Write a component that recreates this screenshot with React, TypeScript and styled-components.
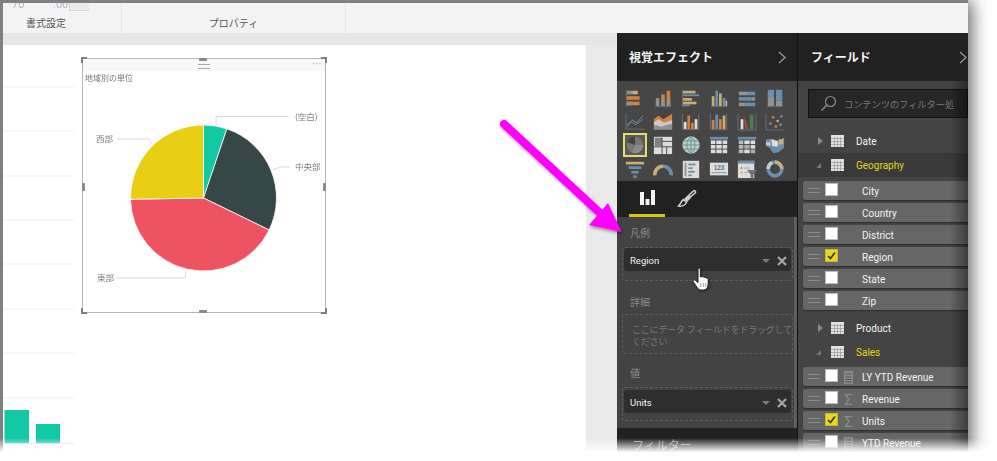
import React from "react";
import styled, { createGlobalStyle } from "styled-components";

const GlobalStyle = createGlobalStyle`
  html, body {
    margin: 0;
    padding: 0;
    background: #fff;
    overflow: hidden;
  }
  body {
    font-family: Roboto, "Noto Sans CJK JP", sans-serif;
  }
`;

const OR = "#e58a3c";
const BL = "#6f98ba";
const TN = "#dcbc78";
const GR = "#9c9c9c";
const WH = "#f2f2f2";
const AX = "#777";

type Bar = [number, number, number, number, string];

// charts made only of rects
const barIcons: Record<string, Bar[]> = {
  stackedBar: [[2, 3, 6, 4, GR], [8, 3, 6, 4, TN], [2, 9, 14, 4, OR], [2, 15, 14, 4, OR], [2, 15, 5, 4, GR], [1, 2, 1, 19, AX]],
  stackedCol: [[3, 11, 4, 9, GR], [9, 7, 4, 13, OR], [15, 3, 4, 17, OR], [15, 12, 4, 8, GR], [9, 14, 4, 6, GR], [2, 20, 18, 1, AX]],
  clusterBar: [[2, 3, 14, 3, TN], [2, 7, 18, 2, BL], [2, 11, 10, 3, TN], [2, 15, 15, 3, TN], [2, 18, 8, 2, BL], [1, 2, 1, 19, AX]],
  clusterCol: [[3, 9, 3, 11, TN], [7, 3, 3, 17, BL], [11, 6, 3, 14, TN], [15, 11, 3, 9, BL], [18, 14, 2, 6, TN], [2, 20, 18, 1, AX]],
  fullBar: [[2, 4, 10, 4, GR], [12, 4, 8, 4, BL], [2, 10, 14, 4, BL], [16, 10, 4, 4, GR], [2, 16, 7, 4, GR], [9, 16, 11, 4, BL]],
  fullCol: [[3, 2, 7, 8, BL], [3, 10, 7, 10, GR], [12, 2, 7, 12, BL], [12, 14, 7, 6, GR], [2, 20, 18, 1, AX]],
  comboA: [[3, 12, 3, 8, WH], [7, 5, 3, 15, OR], [11, 13, 3, 7, OR], [15, 9, 3, 11, WH], [2, 20, 18, 1, AX], [1, 3, 1, 17, AX], [19, 3, 1, 17, AX]],
  comboB: [[3, 10, 3, 10, OR], [7, 4, 3, 16, BL], [11, 9, 3, 11, OR], [15, 5, 3, 15, TN], [2, 20, 18, 1, AX], [1, 3, 1, 17, AX], [19, 3, 1, 17, AX]],
  tableA: [[1, 2, 20, 3, BL], [2, 6, 5, 4, WH], [8, 6, 6, 4, WH], [15, 6, 5, 4, WH], [2, 11, 5, 4, WH], [8, 11, 6, 4, WH], [15, 11, 5, 4, WH], [2, 16, 5, 4, WH], [8, 16, 6, 4, WH], [15, 16, 5, 4, WH]],
  tableB: [[1, 2, 20, 3, BL], [2, 6, 5, 4, "#ccc"], [8, 6, 6, 4, WH], [15, 6, 5, 4, WH], [2, 11, 5, 4, "#ccc"], [8, 11, 6, 4, "#bbb"], [15, 11, 5, 4, WH], [2, 16, 5, 4, "#ccc"], [8, 16, 6, 4, WH], [15, 16, 5, 4, "#bbb"]],
  funnel: [[1, 3, 20, 3, TN], [4, 8, 14, 3, BL], [7, 13, 8, 3, BL], [9, 18, 4, 3, BL]],
  slicer: [[2, 2, 18, 19, WH], [4, 4, 2, 15, GR], [8, 5, 8, 2, BL], [8, 9, 5, 2, GR], [8, 13, 7, 2, BL], [8, 17, 4, 2, GR]],
};

// charts that need curves
const curveIcons: Record<string, React.ReactNode> = {
  line: (
    <>
      <path d="M1 20 L21 20 M1 3 L1 20" stroke={AX} fill="none" />
      <path d="M2 18 L8 10 L13 13 L20 5" stroke={GR} fill="none" />
      <path d="M2 15 L7 12 L12 15 L20 9" stroke={BL} fill="none" />
    </>
  ),
  area: (
    <>
      <path d="M1 20 V9 L6 5 L11 9 L15 7 L21 3 V20 Z" fill={OR} />
      <path d="M1 20 V12 L6 9 L12 13 L21 10 V20 Z" fill="#ddd" />
      <path d="M1 20 V15 L9 17 L21 14 V20 Z" fill={GR} />
    </>
  ),
  ribbon: (
    <>
      <path d="M1 3 V21 H21 V3" stroke={AX} fill="none" />
      <rect x="4" y="9" width="3" height="11" fill={WH} />
      <path d="M8 6 L12 16 V20 H9 L8 12 Z" fill="#b04a40" />
      <rect x="14" y="4" width="4" height="16" fill="#4a8a5a" />
    </>
  ),
  scatter: (
    <>
      <path d="M1 3 V21 H21" stroke={AX} fill="none" />
      <circle cx="6" cy="14" r="1.5" fill={BL} />
      <circle cx="9" cy="7" r="1.5" fill={OR} />
      <circle cx="14" cy="11" r="1.5" fill={TN} />
      <circle cx="18" cy="6" r="1.5" fill={BL} />
      <circle cx="12" cy="17" r="1.5" fill={OR} />
      <circle cx="17" cy="15" r="1.5" fill={BL} />
    </>
  ),
  pie: (
    <>
      <rect width="22" height="22" fill="#5a5a5a" />
      <circle cx="11" cy="11" r="9" fill="#777" />
      <path d="M11 11 L11 2 A9 9 0 0 0 2.5 8 Z" fill="#444" />
      <path d="M11 11 L20 11 A9 9 0 0 1 8 19.5 Z" fill="#8c8c8c" />
    </>
  ),
  tree: (
    <>
      <rect x="1" y="2" width="20" height="19" fill={WH} />
      <rect x="2" y="3" width="8" height="9" fill="#888" />
      <path d="M10 7 H21 M10 3 V21 M1 13 H21 M15 13 V21" stroke="#444" />
    </>
  ),
  globe: (
    <>
      <circle cx="11" cy="11" r="9.5" fill="#cfe3dd" />
      <path d="M1.5 11 H20.5 M3 6.5 H19 M3 15.5 H19 M11 1.5 V20.5 M11 1.5 C5 6 5 16 11 20.5 M11 1.5 C17 6 17 16 11 20.5" stroke="#5f9c94" fill="none" />
    </>
  ),
  filledMap: (
    <>
      <path d="M1 5 L8 4 L14 6 L21 3 V14 L15 19 L9 20 L5 14 L1 12 Z" fill={BL} />
      <path d="M7 5 L14 7 V13 L8 12 Z" fill={WH} />
      <path d="M15 5 L20 4 V10 L15 11 Z" fill={TN} />
      <path d="M1 8 L6 8 V12 L1 11 Z" fill="#ddd" />
    </>
  ),
  gauge: (
    <>
      <path d="M2 18 A9 9 0 0 1 11 8" stroke={TN} strokeWidth="4" fill="none" />
      <path d="M11 8 A9 9 0 0 1 20 18" stroke={BL} strokeWidth="4" fill="none" />
    </>
  ),
  card: (
    <>
      <rect x="1" y="4" width="20" height="14" fill={WH} />
      <text x="11" y="12" fontSize="7" fontWeight="700" textAnchor="middle" fill="#5a7fa0" fontFamily="Liberation Sans, sans-serif">123</text>
      <path d="M3 15 H19" stroke="#999" />
    </>
  ),
  kpi: (
    <>
      <rect x="1" y="2" width="18" height="19" fill={WH} />
      <rect x="1" y="2" width="18" height="3" fill={BL} />
      <circle cx="5" cy="10" r="1.2" fill={OR} />
      <circle cx="5" cy="15" r="1.2" fill={TN} />
      <path d="M8 10 H14 M8 15 H12" stroke="#aaa" />
      <path d="M11 12 H22 L18 17 V22 L15 20 V17 Z" fill="#777" />
    </>
  ),
  donut: (
    <>
      <circle cx="11" cy="11" r="7.5" stroke={BL} strokeWidth="4" fill="none" />
      <path d="M11 3.5 A7.5 7.5 0 0 1 18.5 11" stroke={TN} strokeWidth="4" fill="none" />
      <path d="M3.5 11 A7.5 7.5 0 0 1 8 4" stroke="#ddd" strokeWidth="4" fill="none" />
    </>
  ),
};

const vizOrder = [
  "stackedBar", "stackedCol", "clusterBar", "clusterCol", "fullBar", "fullCol",
  "line", "area", "comboA", "comboB", "ribbon", "scatter",
  "pie", "tree", "globe", "tableA", "tableB", "filledMap",
  "funnel", "gauge", "slicer", "card", "kpi", "donut",
];

const VizIcon = ({ name }: { name: string }) => (
  <svg width="20" height="20" viewBox="0 0 22 22">
    {barIcons[name]?.map((b, i) => (
      <rect key={i} x={b[0]} y={b[1]} width={b[2]} height={b[3]} fill={b[4]} />
    ))}
    {curveIcons[name]}
  </svg>
);

const pieCx = 120.5;
const pieCy = 113;
const pieR = 73;

const slices = [
  { from: 0, to: 18.7, color: "#13c9a5" },
  { from: 18.7, to: 116, color: "#374747" },
  { from: 116, to: 269, color: "#ef5260" },
  { from: 269, to: 360, color: "#e9cf13" },
];

const slicePath = (from: number, to: number) => {
  const point = (deg: number) => {
    const a = (deg * Math.PI) / 180;
    return `${pieCx + pieR * Math.sin(a)} ${pieCy - pieR * Math.cos(a)}`;
  };
  const large = to - from > 180 ? 1 : 0;
  return `M${pieCx} ${pieCy} L${point(from)} A${pieR} ${pieR} 0 ${large} 1 ${point(to)} Z`;
};

const pieLabels = [
  { text: "(空白)", x: 212, y: 35, line: "M133 40 V31.5 H205" },
  { text: "中央部", x: 212, y: 85, line: "M190 85 L197 82 H207" },
  { text: "西部", x: 13, y: 57, line: "M34 54 H66 L69 59" },
  { text: "東部", x: 14, y: 196, line: "M33 193 H102 L103 186" },
];

const geographyFields = ["City", "Country", "District", "Region", "State", "Zip"];
const salesFields = [
  { name: "LY YTD Revenue", kind: "calc" },
  { name: "Revenue", kind: "sum" },
  { name: "Units", kind: "sum", checked: true },
  { name: "YTD Revenue", kind: "calc" },
];

const TableIcon = () => (
  <TableGlyph viewBox="0 0 13 12">
    <rect width="13" height="12" fill="#e2e2e2" />
    <path d="M0 3.5 H13 M0 6.5 H13 M0 9.5 H13 M3.5 2 V12 M6.5 2 V12 M9.5 2 V12" stroke="#8e8e8e" strokeWidth="0.6" />
  </TableGlyph>
);

const FieldRow = ({
  name,
  checked,
  kind,
}: {
  name: string;
  checked?: boolean;
  kind?: string;
}) => (
  <Field>
    <Grip />
    <Check $checked={checked}>
      {checked && (
        <svg width="9" height="9" viewBox="0 0 9 9">
          <path d="M1 5 L3.5 7.5 L8 1.5" stroke="#333" strokeWidth="1.6" fill="none" />
        </svg>
      )}
    </Check>
    <MeasureSlot>
      {kind === "sum" && <Sigma>Σ</Sigma>}
      {kind === "calc" && (
        <svg width="9" height="13" viewBox="0 0 9 13">
          <rect width="9" height="13" fill="#8a8a8a" />
          <path d="M1.5 3 H7.5 M1.5 6 H7.5 M1.5 8.5 H7.5 M1.5 11 H7.5" stroke="#555" />
        </svg>
      )}
    </MeasureSlot>
    {name}
  </Field>
);

const Chevron = () => (
  <svg width="8" height="13" viewBox="0 0 8 13">
    <path d="M1 1 L7 6.5 L1 12" stroke="#9a9a9a" strokeWidth="1.3" fill="none" />
  </svg>
);

const WellPill = ({ name }: { name: string }) => (
  <Pill>
    {name}
    <PillTools>
      <Caret />
      <svg width="10" height="10" viewBox="0 0 10 10">
        <path d="M1 1 L9 9 M9 1 L1 9" stroke="#a5a5a5" strokeWidth="2.2" />
      </svg>
    </PillTools>
  </Pill>
);

const App = () => {
  return (
    <>
      <GlobalStyle />
      <Stage>
        <Frame>
          <Ribbon>
            <RibbonGroup $width={119} $labelInset={32}>
              <RibbonClip>
                <FadedNumber $left={9}>70</FadedNumber>
                <FadedNumber $left={50}>.00</FadedNumber>
                <ClippedSelect />
              </RibbonClip>
              <RibbonLabel>書式設定</RibbonLabel>
            </RibbonGroup>
            <RibbonGroup $width={224} $labelInset={0}>
              <RibbonClip />
              <RibbonLabel>プロパティ</RibbonLabel>
            </RibbonGroup>
          </Ribbon>
          <Workspace>
            <Report>
              <ReportStrip />
              <ReportBody>
                <Page>
                  <BackChart viewBox="0 0 72 400" width="72" height="400">
                    {[42, 86, 131, 175, 219, 264, 308, 353].map((y) => (
                      <line key={y} x1="0" x2="71" y1={y} y2={y} stroke="#efefef" />
                    ))}
                    <rect x="1.5" y="365" width="24.5" height="33" fill="#13c9a5" />
                    <rect x="33" y="379" width="24" height="19" fill="#13c9a5" />
                    <line x1="0" x2="71" y1="398.5" y2="398.5" stroke="#ddd" />
                  </BackChart>
                  <Visual>
                    <VisualBar>
                      <MoveGrip />
                      <MoreDots>···</MoreDots>
                    </VisualBar>
                    <VisualTitle>地域別の単位</VisualTitle>
                    <PieChart width="242" height="226" viewBox="0 0 242 226">
                      {slices.map((s) => (
                        <path
                          key={s.color}
                          d={slicePath(s.from, s.to)}
                          fill={s.color}
                          stroke="#fff"
                          strokeWidth="0.8"
                        />
                      ))}
                      {pieLabels.map((l) => (
                        <g key={l.text}>
                          <path d={l.line} stroke="#d9d9d9" fill="none" />
                          <text x={l.x} y={l.y} fontSize="8.5" fill="#7d7d7d">
                            {l.text}
                          </text>
                        </g>
                      ))}
                    </PieChart>
                    <Corner $v="top" $h="left" />
                    <Corner $v="top" $h="right" />
                    <Corner $v="bottom" $h="left" />
                    <Corner $v="bottom" $h="right" />
                    <SideHandle $side="top" />
                    <SideHandle $side="bottom" />
                    <SideHandle $side="left" />
                    <SideHandle $side="right" />
                  </Visual>
                </Page>
                <Gutter />
              </ReportBody>
            </Report>

            <VizPane>
              <PaneHeader $right={11}>
                視覚エフェクト
                <Chevron />
              </PaneHeader>
              <VizGrid>
                {vizOrder.map((name) => (
                  <VizCell key={name} $selected={name === "pie"}>
                    <VizIcon name={name} />
                  </VizCell>
                ))}
              </VizGrid>
              <Tabs>
                <Tab $active>
                  <svg width="17" height="17" viewBox="0 0 17 17">
                    <rect x="1" y="3" width="4" height="13" fill="#f2f2f2" />
                    <rect x="6.5" y="10" width="4" height="6" fill="#f2f2f2" />
                    <rect x="12" y="1" width="4" height="15" fill="#f2f2f2" />
                  </svg>
                </Tab>
                <Tab>
                  <svg width="20" height="20" viewBox="0 0 20 20">
                    <path d="M12 7 L17 2.5 A1.5 1.5 0 0 1 18.5 4.5 L13.5 9 Z" fill="none" stroke="#cfcfcf" strokeWidth="1.5" />
                    <path d="M11 7 L14 10 L10 14 L7 11 Z" fill="#cfcfcf" />
                    <path d="M6.5 11.5 L9.5 14.5 C7.5 18 4 18.5 1.5 18 C4 16 4 13 6.5 11.5 Z" fill="none" stroke="#cfcfcf" strokeWidth="1.5" />
                  </svg>
                </Tab>
              </Tabs>
              <Wells>
                <WellLabel $top={10} $bottom={6}>凡例</WellLabel>
                <DropZone $height={34} $pad={0}>
                  <WellPill name="Region" />
                </DropZone>
                <WellLabel $top={15} $bottom={4}>詳細</WellLabel>
                <DropZone $height={40} $pad={0}>
                  <Placeholder>
                    ここにデータ フィールドをドラッグして
                    <br />
                    ください
                  </Placeholder>
                </DropZone>
                <WellLabel $top={13} $bottom={6}>値</WellLabel>
                <DropZone $height={34} $pad={2}>
                  <WellPill name="Units" />
                </DropZone>
              </Wells>
              <FilterHeader>フィルター</FilterHeader>
            </VizPane>

            <FieldsPane>
              <FieldsHeader $right={1}>
                フィールド
                <Chevron />
              </FieldsHeader>
              <FieldsBody>
                <SearchBox>
                  <svg width="17" height="17" viewBox="0 0 17 17">
                    <circle cx="10.5" cy="6.5" r="5" stroke="#8a8a8a" strokeWidth="1.2" fill="none" />
                    <path d="M7 10 L1.5 15.5" stroke="#8a8a8a" strokeWidth="1.6" />
                  </svg>
                  コンテンツのフィルター処
                </SearchBox>
                <TableRow>
                  <Expander />
                  <TableIcon />
                  Date
                </TableRow>
                <TableRow $open>
                  <Expander $open />
                  <TableIcon />
                  Geography
                </TableRow>
                <FieldGroup>
                  {geographyFields.map((name) => (
                    <FieldRow key={name} name={name} checked={name === "Region"} />
                  ))}
                </FieldGroup>
                <ProductRow>
                  <Expander />
                  <TableIcon />
                  Product
                </ProductRow>
                <SalesRow>
                  <Expander $open />
                  <TableIcon />
                  Sales
                </SalesRow>
                <SalesGroup>
                  {salesFields.map((f) => (
                    <FieldRow key={f.name} name={f.name} kind={f.kind} checked={f.checked} />
                  ))}
                </SalesGroup>
              </FieldsBody>
              <EdgeShade />
            </FieldsPane>
          </Workspace>
        </Frame>

        <ArrowMark width="140" height="130" viewBox="0 0 140 130">
          <defs>
            <filter id="arrowShadow" x="-20%" y="-20%" width="140%" height="140%">
              <feDropShadow dx="1" dy="2" stdDeviation="1.5" floodColor="#000" floodOpacity="0.4" />
            </filter>
          </defs>
          <g filter="url(#arrowShadow)">
            <path d="M14 14 L110 103" stroke="#ff00ff" strokeWidth="8" strokeLinecap="round" />
            <path d="M131.5 122 L99 115 L118 93 Z" fill="#ff00ff" />
          </g>
        </ArrowMark>

        <HandCursor width="20" height="24" viewBox="0 0 20 24">
          <path
            d="M6 2 C6 0.8 8.3 0.8 8.3 2 V10 L10 9.6 C11 9.4 11.6 9.8 11.8 10.4 C12.8 10 13.6 10.4 13.9 11.1 C15 10.8 16.2 11.3 16.2 12.5 V17 C16.2 20 14.6 23 11.5 23 H9 C6.5 23 5.5 21 3.8 18.5 L1.2 14.8 C0.4 13.6 2 12.2 3.2 13.2 L6 15.5 Z"
            fill="#fff"
            stroke="#222"
            strokeWidth="1"
          />
          <path d="M8.8 16 V20 M11.3 16 V20 M13.8 16 V20" stroke="#777" strokeWidth="0.7" />
        </HandCursor>
        <BottomFade />
      </Stage>
    </>
  );
};

const Stage = styled.div`
  position: relative;
  width: 997px;
  height: 461px;
  overflow: hidden;
  background: #fff;
`;

const Frame = styled.div`
  width: 965px;
  height: 458px;
  border-top: 3px solid #808080;
  border-left: 3px solid #808080;
  box-shadow: 4px 0 16px rgba(0, 0, 0, 0.6);
  display: flex;
  flex-direction: column;
  filter: blur(0.4px);
`;

const Ribbon = styled.div`
  height: 30px;
  flex: none;
  display: flex;
  background: #f3f3f3;
`;

const RibbonGroup = styled.div<{ $width: number; $labelInset: number }>`
  width: ${(p) => p.$width}px;
  padding-right: ${(p) => p.$labelInset}px;
  border-right: 1px solid #e4e4e4;
  box-sizing: border-box;
  display: flex;
  flex-direction: column;
`;

const RibbonClip = styled.div`
  height: 8px;
  position: relative;
  overflow: hidden;
`;

const FadedNumber = styled.span<{ $left: number }>`
  position: absolute;
  left: ${(p) => p.$left}px;
  top: -5px;
  font-size: 11px;
  color: #a9b6cc;
`;

const ClippedSelect = styled.div`
  position: absolute;
  left: 66px;
  top: -2px;
  width: 47px;
  height: 10px;
  border: 1px solid #d4d4d4;
  background: #ebebeb;
  box-sizing: border-box;
`;

const RibbonLabel = styled.div`
  font-size: 10px;
  line-height: 16px;
  margin-top: 5px;
  text-align: center;
  color: #555;
`;

const Workspace = styled.div`
  flex: 1;
  min-height: 0;
  display: flex;
`;

const Report = styled.div`
  width: 614px;
  flex: none;
  display: flex;
  flex-direction: column;
`;

const ReportStrip = styled.div`
  height: 12px;
  flex: none;
  background: #e6e6e6;
`;

const ReportBody = styled.div`
  flex: 1;
  display: flex;
`;

const Page = styled.div`
  width: 583px;
  display: flex;
  align-items: flex-start;
  background: #fff;
`;

const Gutter = styled.div`
  flex: 1;
  background: #e9e9e9;
`;

const BackChart = styled.svg`
  flex: none;
`;

const Visual = styled.div`
  position: relative;
  width: 244px;
  height: 255px;
  box-sizing: border-box;
  margin: 13px 0 0 7px;
  border: 1px solid #b5b5b5;
  will-change: transform;
`;

const VisualBar = styled.div`
  height: 12px;
  background: #f8f8f8;
  display: flex;
  align-items: center;
  justify-content: center;
  position: relative;
`;

const MoveGrip = styled.div`
  width: 12px;
  height: 3px;
  margin-top: 2px;
  border-top: 1px solid #aaa;
  border-bottom: 1px solid #aaa;
`;

const MoreDots = styled.span`
  position: absolute;
  right: 3px;
  top: 0;
  font-size: 11px;
  line-height: 12px;
  color: #aaa;
  letter-spacing: 0.5px;
`;

const VisualTitle = styled.div`
  height: 14px;
  padding-left: 2px;
  font-size: 8px;
  line-height: 16px;
  color: #777;
`;

const PieChart = styled.svg`
  display: block;
  font-family: "Noto Sans CJK JP", sans-serif;
`;

const Corner = styled.div<{ $v: "top" | "bottom"; $h: "left" | "right" }>`
  position: absolute;
  ${(p) => p.$v}: -2px;
  ${(p) => p.$h}: -2px;
  width: 6px;
  height: 6px;
  box-sizing: border-box;
  border-${(p) => p.$v}: 2px solid #808080;
  border-${(p) => p.$h}: 2px solid #808080;
`;

const SideHandle = styled.div<{ $side: "top" | "bottom" | "left" | "right" }>`
  position: absolute;
  background: #8a8a8a;
  border-radius: 1px;
  ${(p) =>
    p.$side === "top" || p.$side === "bottom"
      ? `${p.$side}: -1px; left: 116px; width: 8px; height: 3px;`
      : `${p.$side}: -1px; top: 124px; width: 3px; height: 8px;`}
`;

const VizPane = styled.div`
  width: 180px;
  flex: none;
  display: flex;
  flex-direction: column;
  background: #212121;
  border-right: 1px solid #111;
`;

const PaneHeader = styled.div<{ $right: number }>`
  height: 48px;
  flex: none;
  box-sizing: border-box;
  padding: 0 ${(p) => p.$right}px 2px 12px;
  display: flex;
  align-items: center;
  justify-content: space-between;
  background: #212121;
  color: #f4f4f4;
  font-size: 12px;
  font-weight: 700;
  > svg {
    margin-top: 2px;
  }
`;

const FieldsHeader = styled(PaneHeader)`
  padding-left: 13px;
`;

const VizGrid = styled.div`
  height: 100px;
  flex: none;
  box-sizing: border-box;
  padding: 5px 0 0 4px;
  display: grid;
  grid-template-columns: repeat(6, 28px);
  grid-auto-rows: 23.6px;
  background: #464646;
`;

const VizCell = styled.div<{ $selected?: boolean }>`
  display: flex;
  align-items: center;
  justify-content: center;
  > svg {
    opacity: ${(p) => (p.$selected ? 1 : 0.88)};
    ${(p) => p.$selected && "outline: 2px solid #e8dd62; outline-offset: 0;"}
  }
`;

const Tabs = styled.div`
  height: 36px;
  flex: none;
  box-sizing: border-box;
  padding-left: 12px;
  display: flex;
  gap: 4px;
`;

const Tab = styled.div<{ $active?: boolean }>`
  width: 36px;
  display: flex;
  align-items: center;
  justify-content: center;
  border-bottom: 3px solid ${(p) => (p.$active ? "#d8c70f" : "transparent")};
`;

const Wells = styled.div`
  height: 211px;
  flex: none;
  box-sizing: border-box;
  padding: 0 1px 0 5px;
  border-right: 3px solid #5e5e5e;
  background: #434343;
  display: flex;
  flex-direction: column;
`;

const WellLabel = styled.div<{ $top: number; $bottom: number }>`
  height: 14px;
  margin: ${(p) => p.$top}px 0 ${(p) => p.$bottom}px 8px;
  font-size: 10px;
  line-height: 14px;
  color: #8c8c8c;
`;

const DropZone = styled.div<{ $height: number; $pad: number }>`
  height: ${(p) => p.$height}px;
  flex: none;
  box-sizing: border-box;
  padding: ${(p) => p.$pad}px 1px 0;
  border: 1px dashed #5c5c5c;
  border-radius: 3px;
`;

const Pill = styled.div`
  height: 23px;
  box-sizing: border-box;
  padding: 2px 4px 0 6px;
  display: flex;
  align-items: center;
  justify-content: space-between;
  background: #2e2e2e;
  border-radius: 3px;
  color: #f2f2f2;
  font-size: 9.5px;
`;

const PillTools = styled.div`
  display: flex;
  align-items: center;
  gap: 7px;
`;

const Caret = styled.span`
  width: 0;
  height: 0;
  border-left: 4px solid transparent;
  border-right: 4px solid transparent;
  border-top: 4px solid #7c7c7c;
`;

const Placeholder = styled.div`
  padding: 9px 0 0 8px;
  font-size: 9px;
  line-height: 12px;
  letter-spacing: -0.2px;
  white-space: nowrap;
  color: #7a7a7a;
`;

const FilterHeader = styled.div`
  flex: 1;
  padding: 9px 0 0 15px;
  color: #9a9a9a;
  font-size: 12px;
  line-height: 18px;
  background: #222;
`;

const FieldsPane = styled.div`
  flex: 1;
  min-width: 0;
  position: relative;
  display: flex;
  flex-direction: column;
  background: #444;
`;

const FieldsBody = styled.div`
  flex: 1;
  display: flex;
  flex-direction: column;
  overflow: hidden;
  color: #f2f2f2;
  font-size: 10px;
`;

const SearchBox = styled.div`
  height: 29px;
  flex: none;
  box-sizing: border-box;
  margin: 8px 0 11px 10px;
  padding-left: 11px;
  display: flex;
  align-items: center;
  gap: 7px;
  white-space: nowrap;
  overflow: hidden;
  background: #262626;
  border: 1px solid #111;
  color: #7a7a7a;
  font-size: 9.2px;
  > svg {
    flex: none;
  }
`;

const TableRow = styled.div<{ $open?: boolean }>`
  height: 24px;
  flex: none;
  display: flex;
  align-items: center;
  box-sizing: border-box;
  padding-left: 20px;
  background: ${(p) => (p.$open ? "#3a3a3a" : "transparent")};
  color: ${(p) => (p.$open ? "#e4d316" : "#f2f2f2")};
`;

const ProductRow = styled(TableRow)`
  margin-top: 6px;
`;

const SalesRow = styled(TableRow)`
  color: #e4d316;
`;

const Expander = styled.span<{ $open?: boolean }>`
  width: 0;
  height: 0;
  margin-right: 8px;
  ${(p) =>
    p.$open
      ? `border-bottom: 5px solid #777; border-left: 5px solid transparent; margin-left: -2px; margin-right: 10px;`
      : `border-left: 5px solid #888; border-top: 4px solid transparent; border-bottom: 4px solid transparent;`}
`;

const TableGlyph = styled.svg`
  width: 13px;
  height: 12px;
  margin-right: 12px;
`;

const FieldGroup = styled.div`
  margin: 4px 0 0 5px;
  display: flex;
  flex-direction: column;
  gap: 3px;
`;

const SalesGroup = styled(FieldGroup)`
  margin-top: 3px;
`;

const Field = styled.div`
  height: 19px;
  flex: none;
  box-sizing: border-box;
  display: flex;
  align-items: center;
  padding: 2px 0 0 5px;
  background: #666;
  border-radius: 2px 0 0 2px;
  box-shadow: 0 1px 1px rgba(0, 0, 0, 0.35);
`;

const Grip = styled.span`
  width: 12px;
  height: 3px;
  margin: -2px 5px 0 0;
  border-top: 1px solid #8c8c8c;
  border-bottom: 1px solid #8c8c8c;
`;

const Check = styled.span<{ $checked?: boolean }>`
  width: 13px;
  height: 13px;
  flex: none;
  box-sizing: border-box;
  margin-top: -4px;
  display: flex;
  align-items: center;
  justify-content: center;
  background: ${(p) => (p.$checked ? "#e8d81f" : "#fff")};
  border: 1px solid ${(p) => (p.$checked ? "#c9bb1a" : "#bdbdbd")};
`;

const MeasureSlot = styled.span`
  width: 24px;
  flex: none;
  display: flex;
  justify-content: center;
  padding-right: 3px;
  box-sizing: border-box;
`;

const Sigma = styled.span`
  font-size: 15px;
  line-height: 12px;
  color: #8a8a8a;
`;

const EdgeShade = styled.div`
  position: absolute;
  top: 48px;
  right: 0;
  bottom: 0;
  width: 18px;
  background: linear-gradient(to right, rgba(0, 0, 0, 0), rgba(0, 0, 0, 0.4));
`;

const ArrowMark = styled.svg`
  position: absolute;
  left: 490px;
  top: 110px;
`;

const HandCursor = styled.svg`
  position: absolute;
  left: 692px;
  top: 267px;
  filter: drop-shadow(1px 1px 1px rgba(0, 0, 0, 0.4));
`;

const BottomFade = styled.div`
  position: absolute;
  left: 0;
  right: 0;
  bottom: 0;
  height: 23px;
  background: linear-gradient(to bottom, rgba(255, 255, 255, 0), #fff 62%);
`;

export default App;
